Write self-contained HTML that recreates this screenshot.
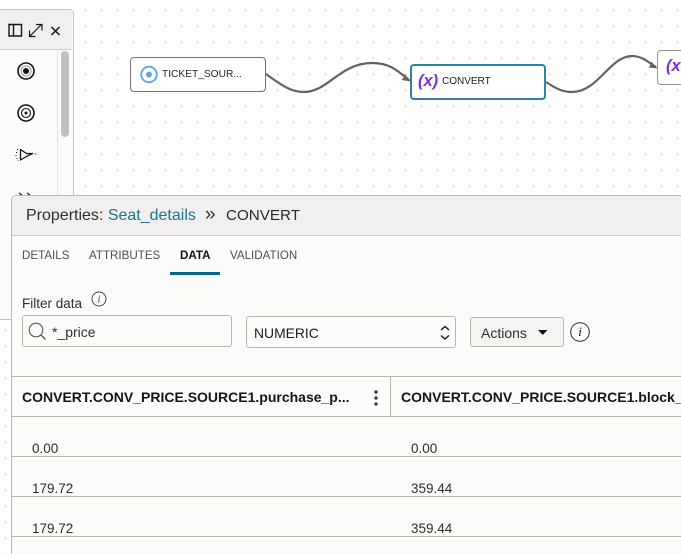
<!DOCTYPE html>
<html style="overflow:hidden;width:681px;height:554px"><head><meta charset="utf-8">
<style>
html,body{margin:0;padding:0}
body{width:681px;height:554px;overflow:hidden;position:relative;background:#fff;font-family:"Liberation Sans",sans-serif;color:#161513}
#w{position:absolute;left:0;top:0;width:681px;height:554px;overflow:hidden}
.a{position:absolute;white-space:nowrap}
.dots{left:0;top:0;width:681px;height:554px;background-image:radial-gradient(circle at 5.5px 10.5px,#d6d4d0 0.8px,transparent 1.1px);background-size:16px 16px}
.hl{position:absolute;height:1px;background:#bcb6ae;left:12px;width:669px}
.cell{font-size:13.5px;color:#312d2a;line-height:16px}
.tab{font-size:11.6px;line-height:14px;color:#524e4a;top:249px}
</style></head><body><div id="w">
<div class="a dots"></div>

<!-- left palette -->
<div class="a" style="left:-2px;top:9px;width:74px;height:309px;background:#fcfcfb;border:1px solid #c4c0ba;border-radius:0 5px 0 0"></div>
<div class="a" style="left:0;top:10px;width:72px;height:39px;background:#f1f0ee;border-bottom:1px solid #d2cfca;border-radius:0 4px 0 0"></div>
<div class="a" style="left:57px;top:50px;width:1px;height:146px;background:#e4e2df"></div>
<div class="a" style="left:61px;top:51px;width:8px;height:86px;background:#c2c0bd;border-radius:4px"></div>
<svg class="a" style="left:0;top:0" width="72" height="200" fill="none" stroke="#161513">
<path d="M9 24.5h12.500v11.500H9zM13.500 24.500v11.500" stroke-width="1.400"/>
<path d="M30 36l11-11M36 24.500h6v6M29.500 30.500v6h6" stroke-width="1.200"/>
<path d="M51.500 27l8 8M59.500 27l-8 8" stroke-width="1.500"/>
<circle cx="26" cy="71" r="8" stroke-width="1.600"/><circle cx="26" cy="71" r="5" stroke="#999" stroke-width="1"/><circle cx="26" cy="71" r="3" fill="#161513" stroke="none"/>
<circle cx="26" cy="113" r="8" stroke-width="1.600"/><circle cx="26" cy="113" r="4.500" stroke-width="1.100"/><circle cx="26" cy="113" r="1.500" fill="#161513" stroke="none"/>
<path d="M20.500 149.500L26.500 153.500H32.500L26.500 156.500L20.500 160Z" stroke-width="1.300" stroke-linejoin="round"/>
<path d="M17.500 149v1M16.500 152v1M16 155v1M17 158v1M18 160v.6M34.500 154h1M36.500 154h.6" stroke-width="1"/>
<path d="M19 193l4 3M27 193l4 3" stroke-width="1.200"/>
</svg>

<!-- connectors -->
<svg class="a" style="left:0;top:0" width="681" height="200" fill="none" stroke="#69625c" stroke-width="2.200">
<path d="M266 74C285 88 293 92 304 92C328 92 340 63 372 63C390 63 398 71 409 80"/>
<path d="M546 82C558 90 564 92 572 92C598 92 610 56 632 56C642 56 648 62 656 67"/>
</svg>
<svg class="a" style="left:0;top:0" width="681" height="200" fill="#69625c">
<path d="M411 81.500l-9.500-1.500 2-2.500 1-3.500z"/><path d="M657.500 68.500l-9-1 2-2.500 .8-3.500z"/>
</svg>

<!-- nodes -->
<div class="a" style="left:130px;top:57px;width:136px;height:35px;box-sizing:border-box;background:#fff;border:1px solid #77716a;border-radius:4px"></div>
<svg class="a" style="left:139px;top:65px" width="20" height="20"><circle cx="10" cy="9.500" r="7.800" fill="none" stroke="#5fa3ec" stroke-width="1.800"/><circle cx="10" cy="9.500" r="3" fill="#5fa3ec"/></svg>
<div class="a" style="left:162px;top:68px;font-size:10.200px;line-height:14px;color:#2b2825">TICKET_SOUR...</div>

<div class="a" style="left:410px;top:64px;width:136px;height:36px;box-sizing:border-box;background:#fff;border:2px solid #2a84a3;border-radius:4px"></div>
<div class="a" style="left:418px;top:71px;font-size:16.500px;line-height:20px;font-weight:bold;font-style:italic;color:#7e2fd6">(x)</div>
<div class="a" style="left:442px;top:75px;font-size:10px;line-height:14px;color:#1d1b19">CONVERT</div>

<div class="a" style="left:657px;top:50px;width:40px;height:35px;box-sizing:border-box;background:#fff;border:1px solid #9b958e;border-radius:4px"></div>
<div class="a" style="left:666px;top:56px;font-size:16.500px;line-height:20px;font-weight:bold;font-style:italic;color:#7e2fd6">(x</div>

<!-- properties panel -->
<div class="a" style="left:11px;top:195px;width:680px;height:359px;box-sizing:border-box;background:#fcfcfa;border:1px solid #bcb8b1;border-bottom:0;border-radius:5px 0 0 0"></div>
<div class="a" style="left:12px;top:196px;width:669px;height:39px;background:#f1f0ee;border-bottom:1px solid #cfccc7;border-radius:4px 0 0 0"></div>
<div class="a" style="left:26px;top:206px;font-size:16px;line-height:20px;color:#312d2a">Properties: <span style="color:#1a7391">Seat_details</span></div>
<div class="a" style="left:205px;top:205px;font-size:19px;line-height:20px;color:#312d2a">»</div>
<div class="a" style="left:226px;top:206px;font-size:15.200px;line-height:20px;color:#2b2825">CONVERT</div>

<div class="a tab" style="left:22px">DETAILS</div>
<div class="a tab" style="left:89px">ATTRIBUTES</div>
<div class="a tab" style="left:180px;font-weight:bold;color:#161513">DATA</div>
<div class="a tab" style="left:230px">VALIDATION</div>
<div class="a" style="left:170px;top:272px;width:50px;height:3px;background:#04668a"></div>

<div class="a" style="left:22px;top:296px;font-size:13.500px;line-height:16px;color:#312d2a">Filter data</div>
<svg class="a" style="left:90px;top:290px" width="18" height="18"><circle cx="9" cy="9" r="7" fill="none" stroke="#4a4642" stroke-width="1"/><text x="9" y="12.500" font-family="Liberation Serif" font-style="italic" font-size="10" text-anchor="middle" fill="#312d2a">i</text></svg>

<div class="a" style="left:22px;top:315px;width:210px;height:32px;box-sizing:border-box;background:#fcfcfa;border:1px solid #bcb6ae;border-radius:3px"></div>
<svg class="a" style="left:26px;top:320px" width="22" height="22" fill="none" stroke="#5c5853"><circle cx="10" cy="10" r="6.800" stroke-width="1.100"/><path d="M15 15l4.500 4.500" stroke-width="1.300"/></svg>
<div class="a" style="left:52px;top:324px;font-size:14px;line-height:16px;color:#312d2a">*_price</div>

<div class="a" style="left:246px;top:316px;width:210px;height:32px;box-sizing:border-box;background:#fcfcfa;border:1px solid #bcb6ae;border-radius:3px"></div>
<div class="a" style="left:254px;top:325px;font-size:13.900px;line-height:16px;color:#1d1b19">NUMERIC</div>
<svg class="a" style="left:438px;top:324px" width="14" height="18" fill="none" stroke="#161513" stroke-width="1.400"><path d="M3 6l4-3.500 4 3.500M3 11.500l4 3.500 4-3.500"/></svg>

<div class="a" style="left:470px;top:317px;width:94px;height:30px;box-sizing:border-box;background:#f5f4f2;border:1px solid #bcb6ae;border-radius:3px"></div>
<div class="a" style="left:481px;top:325px;font-size:14px;line-height:16px;color:#312d2a">Actions</div>
<svg class="a" style="left:537px;top:329px" width="12" height="7"><path d="M1 1h9.500L5.750 6z" fill="#161513"/></svg>
<svg class="a" style="left:569px;top:321px" width="22" height="22"><circle cx="11" cy="11" r="9.300" fill="none" stroke="#312d2a" stroke-width="1"/><text x="11" y="15" font-family="Liberation Serif" font-style="italic" font-size="13" text-anchor="middle" fill="#161513">i</text></svg>

<!-- table -->
<div class="hl" style="top:376px"></div>
<div class="hl" style="top:416px"></div>
<div class="hl" style="top:456px"></div>
<div class="hl" style="top:496px"></div>
<div class="hl" style="top:536px"></div>
<div class="a" style="left:390px;top:377px;width:1px;height:39px;background:#bcb6ae"></div>
<div class="a" style="left:22px;top:389px;font-size:14px;line-height:16px;font-weight:bold;color:#161513">CONVERT.CONV_PRICE.SOURCE1.purchase_p...</div>
<svg class="a" style="left:371px;top:389px" width="10" height="18" fill="#312d2a"><circle cx="5" cy="3" r="1.600"/><circle cx="5" cy="9" r="1.600"/><circle cx="5" cy="15" r="1.600"/></svg>
<div class="a" style="left:401px;top:389px;font-size:14px;line-height:16px;font-weight:bold;color:#161513">CONVERT.CONV_PRICE.SOURCE1.block_</div>

<div class="a cell" style="left:32px;top:441px">0.00</div>
<div class="a cell" style="left:32px;top:481px">179.72</div>
<div class="a cell" style="left:32px;top:521px">179.72</div>
<div class="a cell" style="left:411px;top:441px">0.00</div>
<div class="a cell" style="left:411px;top:481px">359.44</div>
<div class="a cell" style="left:411px;top:521px">359.44</div>
</div></body></html>
